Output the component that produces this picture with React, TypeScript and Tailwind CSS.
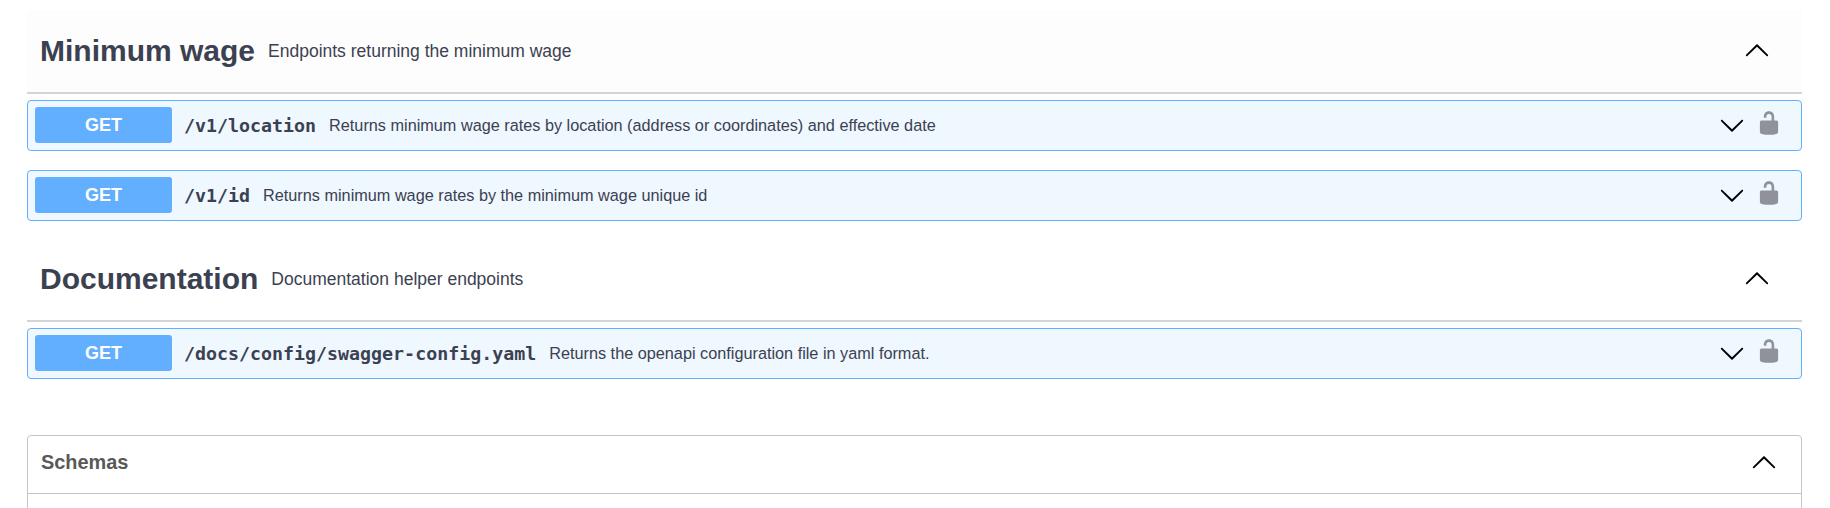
const sans = "font-['Liberation_Sans',Arial,sans-serif]";

function ArrowIcon({ up, className }: { up?: boolean; className: string }) {
  return (
    <svg viewBox="0 0 20 20" className={`${className} ${up ? "rotate-180" : ""}`} fill="currentColor">
      <path d="M17.418 6.109c.272-.268.709-.268.979 0s.271.701 0 .969l-7.908 7.83c-.27.268-.707.268-.979 0l-7.908-7.83c-.27-.268-.27-.701 0-.969.271-.268.709-.268.979 0L10 13.25l7.418-7.141z" />
    </svg>
  );
}

function UnlockIcon() {
  return (
    <svg viewBox="0 0 20 20" className="h-[26px] w-[26px] text-[#8f9399]" fill="currentColor">
      <path d="M15.8 8H14V5.6C14 2.703 12.665 1 10 1 7.334 1 6 2.703 6 5.6V6h2v-.801C8 3.754 8.797 3 10 3c1.203 0 2 .754 2 2.199V8H4c-.553 0-1 .646-1 1.199V17c0 .549.428 1.139.951 1.307l1.197.387C5.672 18.861 6.55 19 7.1 19h5.8c.549 0 1.428-.139 1.951-.307l1.196-.387c.524-.167.953-.757.953-1.306V9.199C17 8.646 16.352 8 15.8 8z" />
    </svg>
  );
}

function Tag({ name, desc, bg }: { name: string; desc: string; bg: string }) {
  return (
    <div className={`flex h-[84px] items-center border-b-2 border-[#d3d4d6] pl-[13px] pr-[32px] ${bg}`}>
      <h3 className="text-[30px] leading-none font-bold text-[#3b4151]">{name}</h3>
      <p className="ml-[13px] text-[17.5px] text-[#3b4151]">{desc}</p>
      <ArrowIcon up className="ml-auto h-[26px] w-[26px] text-black" />
    </div>
  );
}

function Endpoint({ path, desc }: { path: string; desc: string }) {
  return (
    <div className="mt-[6px] flex h-[51px] items-center rounded-[4px] border border-[#61affe] bg-[#eff7ff] pl-[7px] pr-[19px]">
      <span className="-mt-[1px] flex h-[36px] w-[137px] items-center justify-center rounded-[3px] bg-[#61affe] text-[18px] font-bold text-white">
        GET
      </span>
      <span className="ml-[12px] font-['DejaVu_Sans_Mono',monospace] text-[18.3px] font-bold text-[#3b4151]">
        {path}
      </span>
      <span className="ml-[13px] text-[16.25px] text-[#3b4151]">{desc}</span>
      <ArrowIcon className="-mt-[1px] ml-auto h-[26px] w-[26px] text-black" />
      <span className="-mt-[5px] ml-[11px]">
        <UnlockIcon />
      </span>
    </div>
  );
}

export default function App() {
  return (
    <main className={`h-[508px] overflow-hidden bg-white pt-[10px] pr-[28px] pl-[27px] ${sans}`}>
      <Tag name="Minimum wage" desc="Endpoints returning the minimum wage" bg="bg-[#fdfdfd]" />
      <Endpoint
        path="/v1/location"
        desc="Returns minimum wage rates by location (address or coordinates) and effective date"
      />
      <div className="mt-[19px]">
        <Endpoint path="/v1/id" desc="Returns minimum wage rates by the minimum wage unique id" />
      </div>

      <div className="mt-[17px]">
        <Tag name="Documentation" desc="Documentation helper endpoints" bg="bg-white" />
      </div>
      <Endpoint
        path="/docs/config/swagger-config.yaml"
        desc="Returns the openapi configuration file in yaml format."
      />

      {/* Schemas */}
      <section className="mt-[56px] h-[120px] rounded-[4px] border border-[#c4c4c4]">
        <div className="flex h-[58px] items-center border-b border-[#c4c4c4] pb-[3px] pl-[13px] pr-[24px]">
          <h4 className="text-[19.9px] font-bold text-[#595959]">Schemas</h4>
          <ArrowIcon up className="ml-auto h-[26px] w-[26px] text-black" />
        </div>
      </section>
    </main>
  );
}
